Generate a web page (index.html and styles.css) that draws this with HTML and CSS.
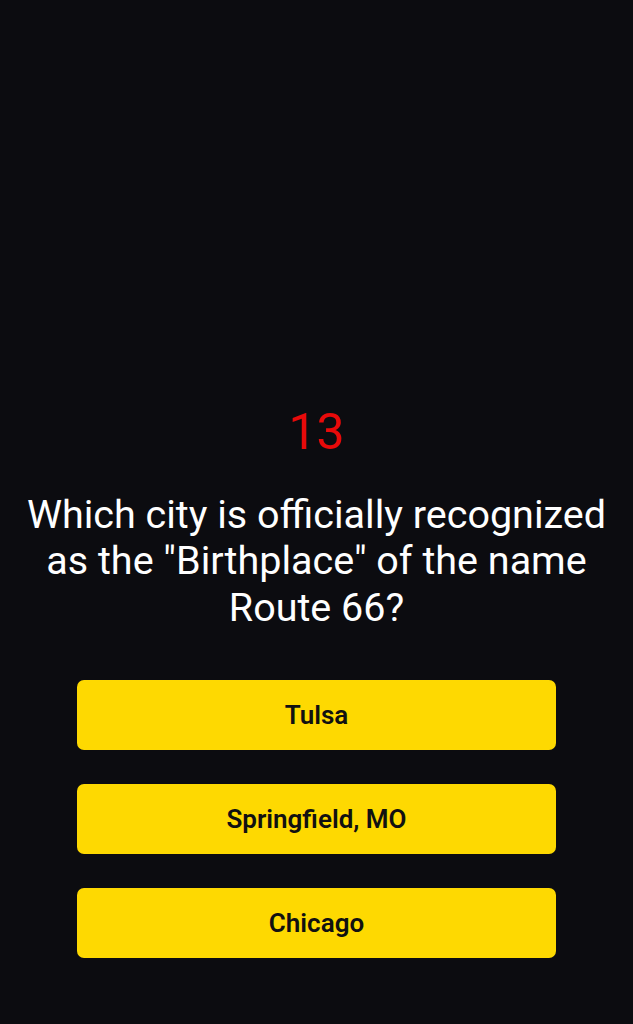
FILE: index.html
```html
<!doctype html>
<html lang="en">
  <head>
    <meta charset="UTF-8" />
    <meta name="viewport" content="width=device-width, initial-scale=1.0" />
    <title>Quiz</title>
    <link rel="stylesheet" href="styles.css">
  </head>
  <body>
    <main class="quiz">
      <div class="counter">13</div>
      <h1 class="question">Which city is officially recognized as the "Birthplace" of the name Route 66?</h1>

      <div class="answers">
        <button type="button" class="answer">Tulsa</button>
        <button type="button" class="answer">Springfield, MO</button>
        <button type="button" class="answer">Chicago</button>
      </div>
    </main>
  </body>
</html>
```

FILE: styles.css
```css
:root {
  box-sizing: border-box;
  background-color: #0c0c10;
  color: #fff;
  font: 16px Roboto, sans-serif;
}

*,
*:before,
*:after {
  box-sizing: inherit;
}

body {
  margin: 0;
}

.quiz {
  display: flex;
  flex-direction: column;
  align-items: center;
  justify-content: flex-end;
  min-height: 1024px;
  padding: 0 20px 66px;
}

.counter {
  color: #e80a0a;
  font-size: 50px;
  line-height: 1;
  margin-bottom: 35px;
}

.question {
  margin: 0 0 49px;
  font-size: 39.5px;
  font-weight: 400;
  line-height: 46.5px;
  text-align: center;
}

.answers {
  display: flex;
  flex-direction: column;
  gap: 34px;
  width: 479px;
}

.answer {
  height: 70px;
  border: none;
  border-radius: 7px;
  background-color: #fed901;
  color: #111;
  font: 600 26px Roboto, sans-serif;
  cursor: pointer;
}
```
